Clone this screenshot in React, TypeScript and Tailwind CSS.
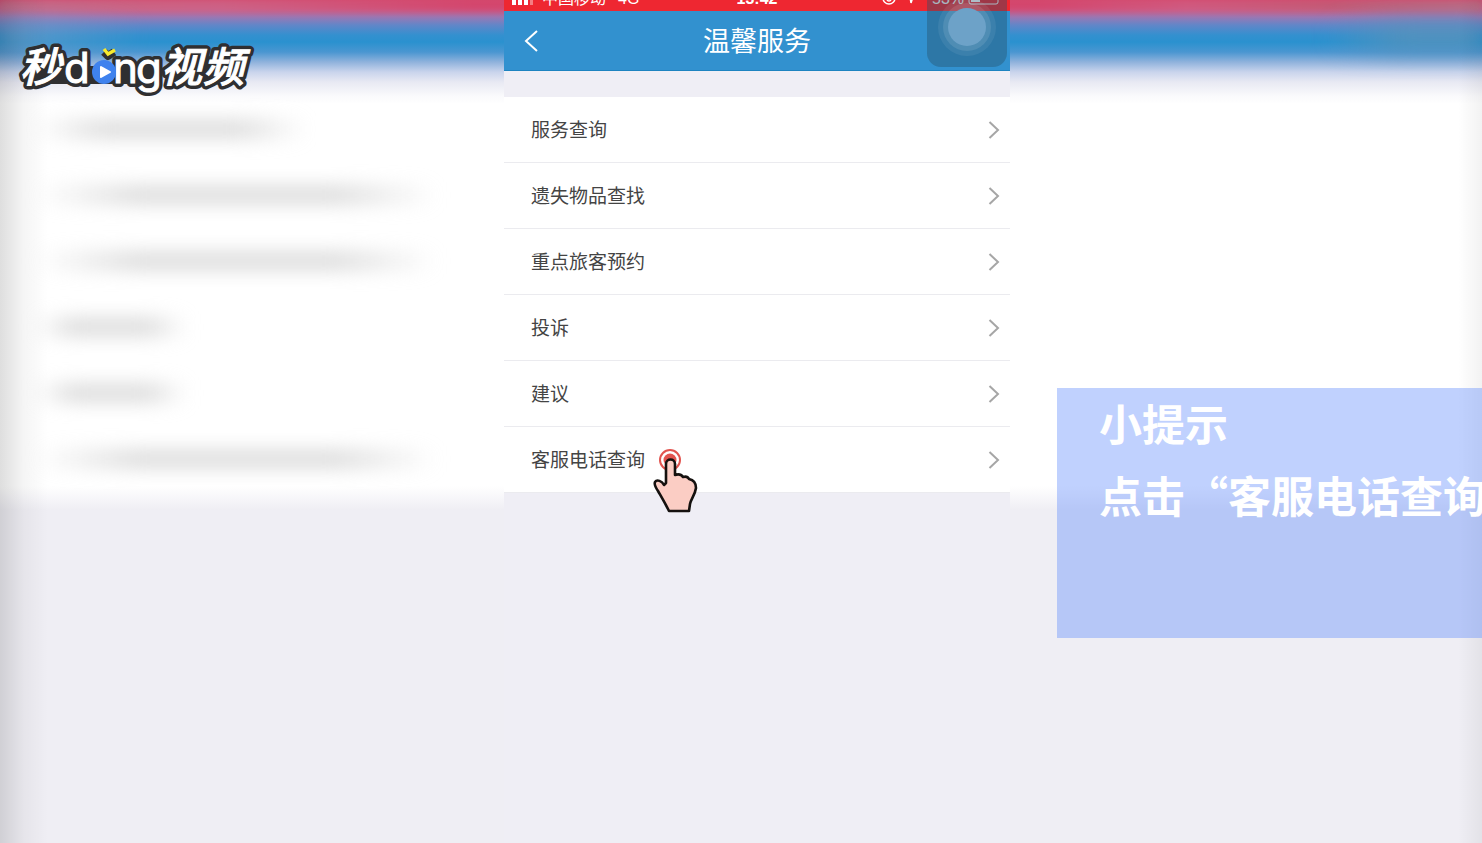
import React from "react";

const services = ["服务查询", "遗失物品查找", "重点旅客预约", "投诉", "建议", "客服电话查询"];

const ghostWidths = ["w-[270px]", "w-[400px]", "w-[400px]", "w-[150px]", "w-[150px]", "w-[400px]"];

function Backdrop() {
  return (
    <div aria-hidden="true" className="absolute inset-0 overflow-hidden bg-[#efeef4]">
      <div className="flex h-full flex-col">
        <div className="relative h-[104px] bg-[linear-gradient(to_bottom,#d24d72_0px,#c8608c_9px,#9a78b4_17px,#6286c8_25px,#3490cf_35px,#2a91cf_42px,#4a96d1_52px,#8fb2dc_62px,#c9d4ec_72px,#e8e9f3_82px,#fafafc_96px,#ffffff_104px)]">
          <div className="absolute inset-x-0 top-0 h-3 bg-[linear-gradient(to_right,#c66f84_0%,#cf6685_15%,#d93a60_32%,#d93a60_70%,#d4597c_80%,#bf5a6c_90%,#b9727f_100%)] opacity-60 blur-[3px]" />
          <div className="absolute top-4 left-0 h-10 w-36 bg-[linear-gradient(to_right,#7f9fc4,transparent)] opacity-60 blur-md" />
          <div className="absolute top-5 right-0 h-8 w-40 bg-[linear-gradient(to_right,transparent,#5f92b8_50%)] opacity-80 blur-md" />
        </div>
        <div className="h-[382px] bg-white">
          {ghostWidths.map((width, index) => (
            <div key={index} className="flex h-[66px] items-start pt-[18px] pl-[36px]">
              <div className={`${width} h-3.5 bg-[linear-gradient(to_right,transparent,#d0d0d0_25%,#d0d0d0_75%,transparent)] blur-[10px]`} />
            </div>
          ))}
        </div>
        <div className="h-6 bg-[linear-gradient(to_bottom,#ffffff,#efeef4)]" />
      </div>
      <div className="absolute inset-y-0 left-0 w-12 bg-[linear-gradient(to_right,rgba(0,0,0,0.13),rgba(0,0,0,0.04)_50%,transparent)]" />
      <div className="absolute inset-y-0 right-0 w-6 bg-[linear-gradient(to_left,rgba(0,0,0,0.05),transparent)]" />
    </div>
  );
}

function BrandLetters() {
  return (
    <>
      <text x="8" y="42" fontSize="41" fontStyle="italic" fontWeight="500">秒</text>
      <text x="52" y="43" fontSize="42" className="font-['Inter']">d</text>
      <text x="101" y="43" fontSize="42" className="font-['Inter']">n</text>
      <text x="124" y="43" fontSize="42" className="font-['Inter']">g</text>
      <text x="149" y="42" fontSize="41" fontStyle="italic" fontWeight="500">视</text>
      <text x="191" y="42" fontSize="41" fontStyle="italic" fontWeight="500">频</text>
    </>
  );
}

function Logo() {
  return (
    <svg role="img" aria-label="秒dong视频" width="260" height="64" viewBox="0 0 260 64" className="overflow-visible font-['Noto_Sans_CJK_SC',sans-serif]">
      <g fill="#2f2f31" stroke="#2f2f31" strokeWidth="8" strokeLinejoin="round" aria-hidden="true">
        <path d="M20 20h50v22H14zM160 20h74l-4 22h-74zM60 28h88v14H60z" strokeWidth="4" />
        <path d="M92 12l4 4 6-4" />
        <BrandLetters />
      </g>
      <g fill="#fff" stroke="#fff" strokeWidth="1" aria-hidden="true">
        <BrandLetters />
      </g>
      <circle cx="92" cy="32" r="12" fill="#3f82ee" />
      <path d="M89 27l9 5-9 5z" fill="#fff" stroke="#fff" strokeWidth="2" strokeLinejoin="round" />
      <path d="M92 9l4 5 7-4" fill="none" stroke="#f7ea2e" strokeWidth="3.4" />
    </svg>
  );
}

function StatusBar() {
  return (
    <div className="flex h-[11px] items-end overflow-hidden bg-[#ee2731] px-2 pb-1.5 text-base leading-none text-white">
      <div className="flex flex-1 items-end gap-2">
        <svg width="22" height="14" viewBox="0 0 22 14" fill="#fff" aria-hidden="true">
          <path d="M0 8h4v6H0zM6 6h4v8H6zM12 4h4v10h-4z" />
          <path d="M18 2h3v12h-3z" opacity=".4" />
        </svg>
        <span className="-mb-0.5">中国移动</span>
        <span className="-mb-0.5 ml-1">4G</span>
      </div>
      <span className="-mb-0.5 font-bold">13:42</span>
      <div className="flex flex-1 items-end justify-end gap-2">
        <svg width="44" height="16" viewBox="0 0 44 16" fill="none" stroke="#fff" strokeWidth="1.5" aria-hidden="true">
          <circle cx="9" cy="9" r="6" />
          <path d="M9 5v3a2 2 0 1 1-2 2M26 7l9-5-4 12-1-6z" />
        </svg>
        <span className="-mb-0.5">53%</span>
        <svg width="34" height="14" viewBox="0 0 34 14" fill="none" aria-hidden="true" className="-ml-1">
          <rect x="1" y="0" width="29" height="13" rx="2" stroke="#fff" />
          <path d="M3 2h9v9H3z" fill="#fff" />
          <path d="M32 5v4" stroke="#fff" strokeWidth="2" />
        </svg>
      </div>
    </div>
  );
}

function AssistiveTouch() {
  return (
    <button type="button" aria-label="辅助触控" className="absolute -top-[13px] right-[3px] h-20 w-20 overflow-hidden rounded-[14px] bg-[#25506a]/40">
      <svg width="80" height="80" viewBox="0 0 80 80" aria-hidden="true">
        <circle cx="40" cy="40" r="29" fill="#fff" opacity=".07" />
        <circle cx="40" cy="40" r="24" fill="#fff" opacity=".1" />
        <circle cx="40" cy="40" r="19" fill="#6da2c8" />
      </svg>
    </button>
  );
}

function TapHand() {
  return (
    <svg width="48" height="68" viewBox="0 0 48 68" fill="none" aria-hidden="true" className="pointer-events-none absolute top-0.5 left-full z-10 ml-1.5">
      <circle cx="19" cy="13" r="10" stroke="#e2544f" strokeWidth="2" fill="#fff" />
      <circle cx="19" cy="13" r="6.500" fill="#e2544f" />
      <path
        d="M15 36V17c0-6 9-6 9 0v11c3-1 6-1 8 2 3-1 5 0 6 2 5 1 7 4 7 9-1 7-5 11-6 16l-1 7H18C14 56 11 51 7 44c-2-3-4-7-3-9 2-3 7-1 9 3z"
        fill="#fbcdc4"
        stroke="#15110f"
        strokeWidth="2.6"
        strokeLinejoin="round"
      />
    </svg>
  );
}

function Phone() {
  return (
    <main className="relative bg-[#efeef5]">
      <StatusBar />
      <header className="grid h-[60px] grid-cols-[1fr_auto_1fr] items-center border-b border-[#1d83c0] bg-[#3291cf] text-white">
        <button type="button" aria-label="返回" className="ml-5 w-fit">
          <svg width="14" height="24" viewBox="0 0 14 24" fill="none" stroke="#fff" strokeWidth="2" aria-hidden="true">
            <path d="M13 2L2 12l11 10" />
          </svg>
        </button>
        <h1 className="pt-0.5 text-[27px] leading-9">温馨服务</h1>
      </header>
      <AssistiveTouch />
      <ul className="mt-[26px] bg-white">
        {services.map((name, index) => (
          <li key={name} className="border-b border-[#ebebef]">
            <a href="#" className="flex h-[65px] items-center justify-between pr-2.5 pl-[27px] text-[19px] leading-7 text-[#444]">
              <span className="relative pt-0.5">
                {name}
                {index === services.length - 1 && <TapHand />}
              </span>
              <svg width="12" height="20" viewBox="0 0 12 20" fill="none" stroke="#a6a6a6" strokeWidth="2" aria-hidden="true">
                <path d="M1.500 2l8.500 8-8.500 8" />
              </svg>
            </a>
          </li>
        ))}
      </ul>
    </main>
  );
}

export default function App() {
  return (
    <div className="relative isolate min-h-screen overflow-hidden font-['Liberation_Sans','Noto_Sans_CJK_SC',sans-serif]">
      <Backdrop />
      <div className="relative grid min-h-screen grid-cols-[504fr_506fr_472fr]">
        <div className="pt-10 pl-3">
          <Logo />
        </div>
        <Phone />
        <aside className="min-w-0 pt-[388px] pl-[47px]">
          <div className="h-[250px] overflow-hidden bg-[#618cfc]/40 pt-1 pl-[42px] font-['Noto_Sans_CJK_SC',sans-serif] text-[43px] font-bold whitespace-nowrap text-white">
            <h2 className="leading-[60px]">小提示</h2>
            <p className="mt-3 leading-[60px]">点击“客服电话查询</p>
          </div>
        </aside>
      </div>
    </div>
  );
}
